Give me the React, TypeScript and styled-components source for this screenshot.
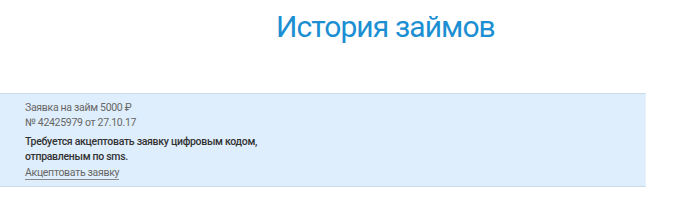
import React from "react";
import styled, { createGlobalStyle } from "styled-components";

const GlobalStyle = createGlobalStyle`
  body {
    margin: 0;
    background: #fff;
    font-family: Roboto, "Noto Sans", sans-serif;
  }
`;

const Page = styled.div`
  width: 700px;
  padding-top: 7px;
`;

const Title = styled.h1`
  margin: 0 0 0 276px;
  font-family: Roboto, sans-serif;
  font-weight: 400;
  font-size: 30px;
  line-height: 40px;
  letter-spacing: -0.9px;
  color: #1b8fd2;
`;

const Card = styled.div`
  margin-top: 46px;
  width: 646px;
  box-sizing: border-box;
  background: #dfeefc;
  border-top: 1px solid #c6dbee;
  border-bottom: 1px solid #c6dbee;
  border-right: 1px solid #e9f2fb;
  padding: 6px 25px 6px;
  font-size: 10.5px;
  line-height: 15px;
  letter-spacing: -0.3px;
`;

const Line = styled.div<{ $bold?: boolean }>`
  color: ${({ $bold }) => ($bold ? "#333" : "#666")};
  font-weight: ${({ $bold }) => ($bold ? 500 : 400)};
`;

const Group = styled.div<{ $gap: number }>`
  margin-bottom: ${({ $gap }) => $gap}px;
`;

const Link = styled.a`
  display: inline-block;
  line-height: 13px;
  color: #666;
  text-decoration: none;
  border-bottom: 1px solid #888;
`;

export default function App() {
  return (
    <Page>
      <GlobalStyle />
      <Title>История займов</Title>
      <Card>
        <Group $gap={4}>
          <Line>Заявка на займ 5000 ₽</Line>
          <Line>№ 42425979 от 27.10.17</Line>
        </Group>
        <Group $gap={1}>
          <Line $bold>Требуется акцептовать заявку цифровым кодом,</Line>
          <Line $bold>отправленым по sms.</Line>
        </Group>
        <Link href="#">Акцептовать заявку</Link>
      </Card>
    </Page>
  );
}
